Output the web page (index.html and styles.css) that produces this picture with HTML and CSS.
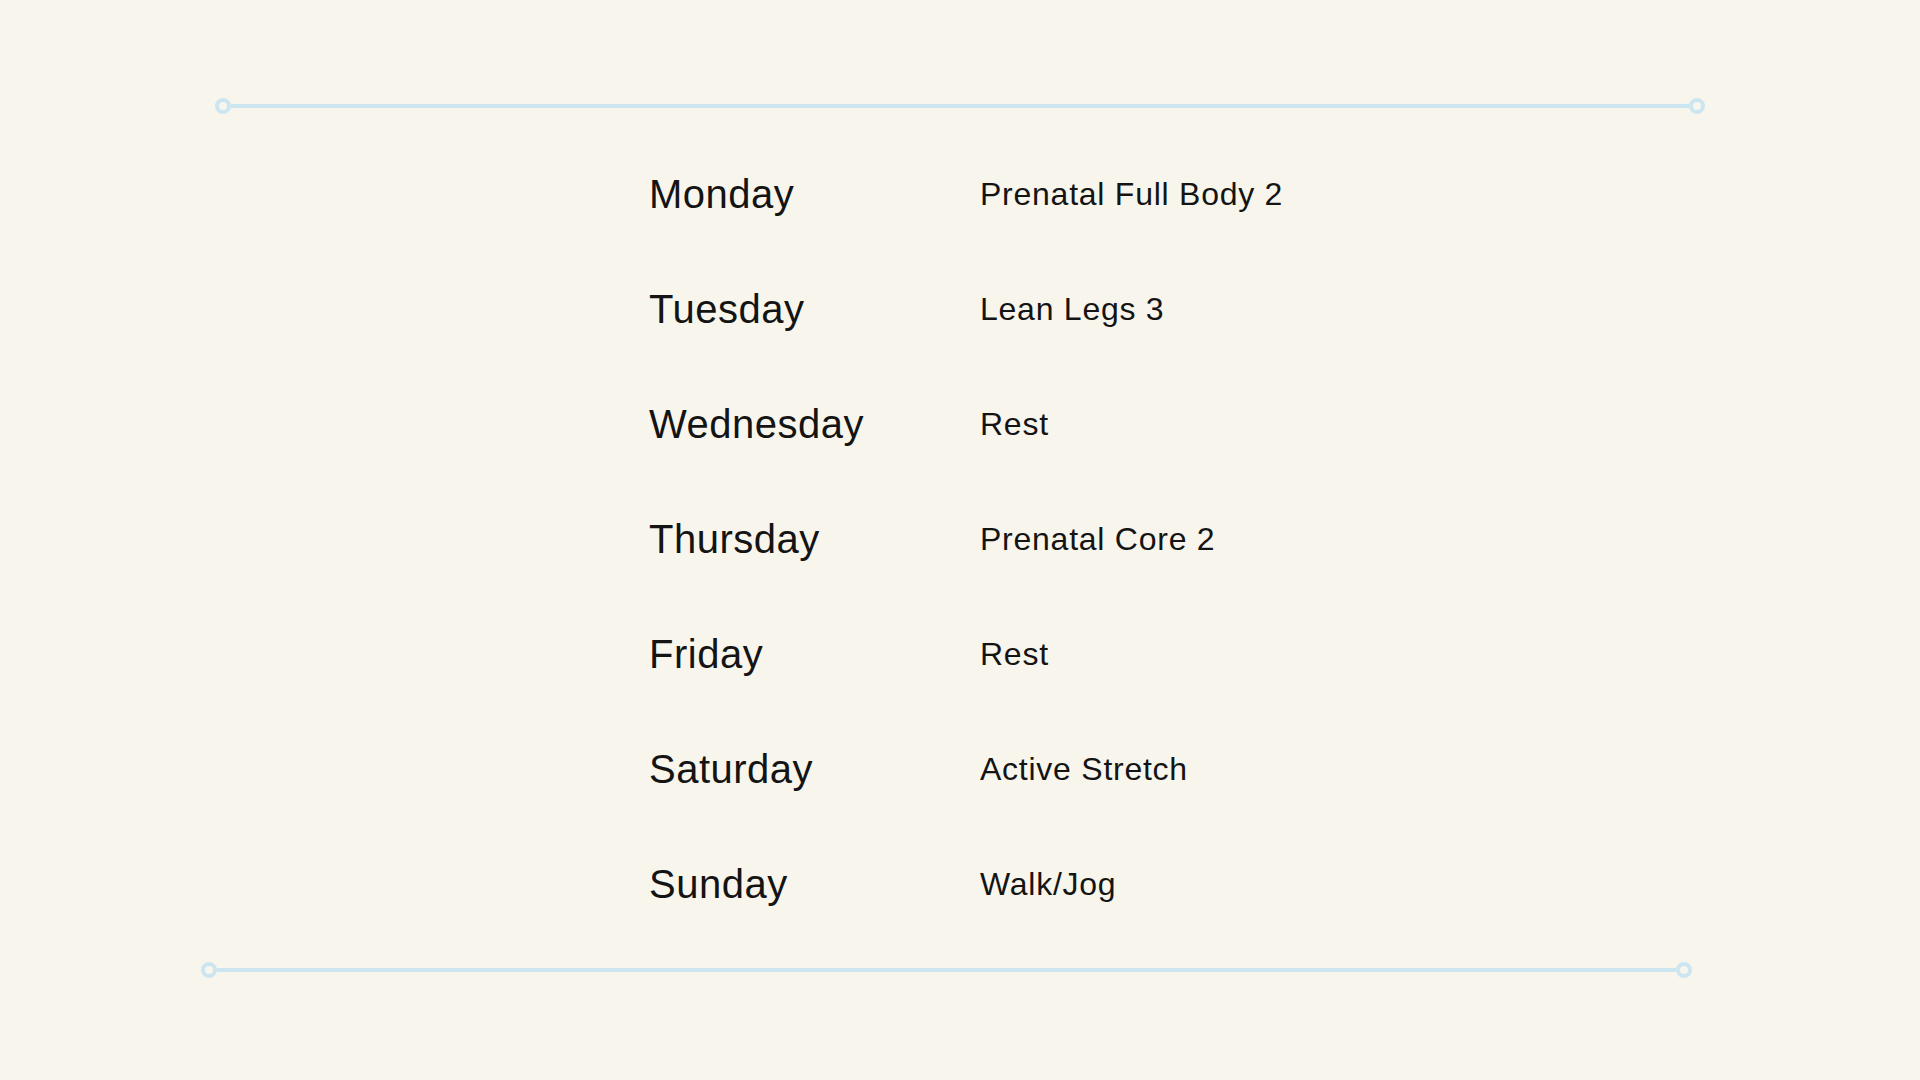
FILE: index.html
```html
<!DOCTYPE html>
<html lang="en">
<head>
<meta charset="utf-8">
<title>Weekly Schedule</title>
<link rel="stylesheet" href="styles.css">
</head>
<body>
<main class="page">
  <div class="divider divider-top">
    <span class="knob"></span><span class="rule"></span><span class="knob"></span>
  </div>
  <section class="schedule">
    <div class="day">Monday</div><div class="workout">Prenatal Full Body 2</div>
    <div class="day">Tuesday</div><div class="workout">Lean Legs 3</div>
    <div class="day">Wednesday</div><div class="workout">Rest</div>
    <div class="day">Thursday</div><div class="workout">Prenatal Core 2</div>
    <div class="day">Friday</div><div class="workout">Rest</div>
    <div class="day">Saturday</div><div class="workout">Active Stretch</div>
    <div class="day">Sunday</div><div class="workout">Walk/Jog</div>
  </section>
  <div class="divider divider-bottom">
    <span class="knob"></span><span class="rule"></span><span class="knob"></span>
  </div>
</main>
</body>
</html>
```
FILE: styles.css
```css
html, body {
  margin: 0;
  padding: 0;
}
body {
  background: #f8f6ec;
  color: #141414;
  font-family: "Liberation Sans", Arial, Helvetica, sans-serif;
  width: 1920px;
  height: 1080px;
  overflow: hidden;
}
.page {
  display: flex;
  flex-direction: column;
  align-items: flex-start;
  padding-top: 98px;
}
.divider {
  display: flex;
  align-items: center;
  height: 16px;
}
.divider-top {
  margin-left: 215px;
  width: 1490px;
}
.divider-bottom {
  margin-left: 201px;
  width: 1491px;
  margin-top: 20px;
}
.knob {
  width: 16px;
  height: 16px;
  box-sizing: border-box;
  border: 4px solid #cbe6f0;
  border-radius: 50%;
  flex: none;
}
.rule {
  flex: 1;
  height: 4px;
  background: #cbe6f0;
}
.schedule {
  margin-top: 23px;
  margin-left: 649px;
  display: grid;
  grid-template-columns: 331px auto;
  grid-auto-rows: 115px;
  align-items: center;
}
.day {
  font-size: 40px;
  letter-spacing: 0.5px;
  line-height: normal;
}
.workout {
  font-size: 32px;
  letter-spacing: 0.75px;
  line-height: normal;
}
```
